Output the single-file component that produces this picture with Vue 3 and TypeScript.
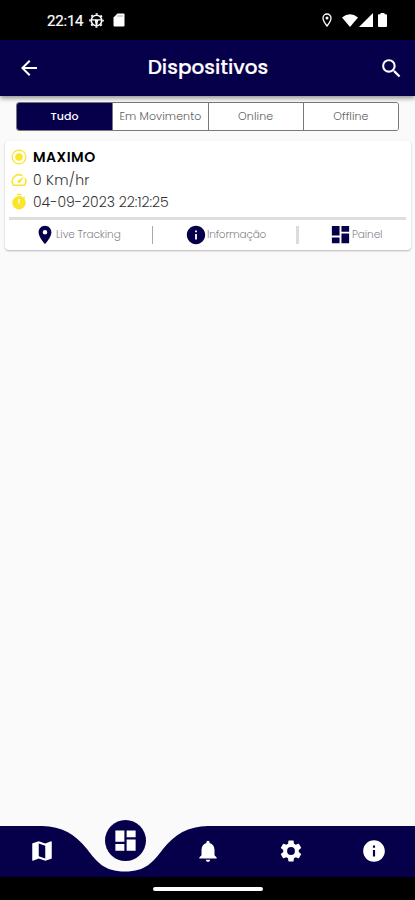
<script setup lang="ts">
import { ref } from 'vue'

const icons = {
  back: 'M20 11H7.83l5.59-5.59L12 4l-8 8 8 8 1.41-1.41L7.83 13H20v-2z',
  search: 'M15.5 14h-.79l-.28-.27A6.47 6.47 0 0 0 16 9.5 6.5 6.5 0 1 0 9.5 16c1.61 0 3.09-.59 4.23-1.57l.27.28v.79l5 4.99L20.49 19l-4.99-5zm-6 0C7.01 14 5 11.99 5 9.5S7.01 5 9.5 5 14 7.01 14 9.5 11.99 14 9.5 14z',
  pin: 'M12 2C8.13 2 5 5.13 5 9c0 5.25 7 13 7 13s7-7.75 7-13c0-3.87-3.13-7-7-7zm0 9.5a2.5 2.5 0 0 1 0-5 2.5 2.5 0 0 1 0 5z',
  info: 'M12 2C6.48 2 2 6.48 2 12s4.48 10 10 10 10-4.48 10-10S17.52 2 12 2zm1 15h-2v-6h2v6zm0-8h-2V7h2v2z',
  dashboard: 'M3 13h8V3H3v10zm0 8h8v-6H3v6zm10 0h8V11h-8v10zm0-18v6h8V3h-8z',
  map: 'M20.5 3l-.16.03L15 5.1 9 3 3.36 4.9c-.21.07-.36.25-.36.48V20.5c0 .28.22.5.5.5l.16-.03L9 18.9l6 2.1 5.64-1.9c.21-.07.36-.25.36-.48V3.5c0-.28-.22-.5-.5-.5zM15 19l-6-2.11V5l6 2.11V19z',
  bell: 'M12 22c1.1 0 2-.9 2-2h-4c0 1.1.89 2 2 2zm6-6v-5c0-3.07-1.64-5.64-4.5-6.32V4c0-.83-.67-1.5-1.5-1.5s-1.5.67-1.5 1.5v.68C7.63 5.36 6 7.92 6 11v5l-2 2v1h16v-1l-2-2z',
  gear: 'M19.14 12.94c.04-.3.06-.61.06-.94 0-.32-.02-.64-.07-.94l2.03-1.58c.18-.14.23-.41.12-.61l-1.92-3.32c-.12-.22-.37-.29-.59-.22l-2.39.96c-.5-.38-1.03-.7-1.62-.94l-.36-2.54c-.04-.24-.24-.41-.48-.41h-3.84c-.24 0-.43.17-.47.41l-.36 2.54c-.59.24-1.13.57-1.62.94l-2.39-.96c-.22-.08-.47 0-.59.22L2.74 8.87c-.12.21-.08.47.12.61l2.03 1.58c-.05.3-.09.63-.09.94s.02.64.07.94l-2.03 1.58c-.18.14-.23.41-.12.61l1.92 3.32c.12.22.37.29.59.22l2.39-.96c.5.38 1.03.7 1.62.94l.36 2.54c.05.24.24.41.48.41h3.84c.24 0 .44-.17.47-.41l.36-2.54c.59-.24 1.13-.56 1.62-.94l2.39.96c.22.08.47 0 .59-.22l1.92-3.32c.12-.22.07-.47-.12-.61l-2.01-1.58zM12 15.6A3.6 3.6 0 1 1 12 8.4a3.6 3.6 0 0 1 0 7.2z',
  radio: 'M12 7a5 5 0 1 0 0 10 5 5 0 0 0 0-10zm0-5a10 10 0 1 0 0 20 10 10 0 0 0 0-20zm0 18.4a8.4 8.4 0 1 1 0-16.8 8.4 8.4 0 0 1 0 16.8z',
  speed: 'M20.38 8.57l-1.23 1.85a8 8 0 0 1-.22 7.58H5.07A8 8 0 0 1 15.58 6.85l1.85-1.23A10 10 0 0 0 3.35 19a2 2 0 0 0 1.72 1h13.85a2 2 0 0 0 1.74-1 10 10 0 0 0-.27-10.44zm-9.79 6.84a2 2 0 0 0 2.83 0l5.66-8.49-8.49 5.66a2 2 0 0 0 0 2.83z',
  timer: 'M9 1h6v2H9zM19.03 7.39l1.42-1.42c-.43-.51-.9-.99-1.41-1.41l-1.42 1.42A8.96 8.96 0 0 0 12 4a9 9 0 1 0 7.03 3.39zM13 14h-2V8h2v6z',
}

const tabs = ['Tudo', 'Em Movimento', 'Online', 'Offline']
const activeTab = ref('Tudo')

const device = { name: 'MAXIMO', speed: '0 Km/hr', time: '04-09-2023 22:12:25' }

const navItems = [
  { id: 'map', icon: icons.map },
  { id: 'devices', icon: icons.dashboard },
  { id: 'alerts', icon: icons.bell },
  { id: 'settings', icon: icons.gear },
  { id: 'about', icon: icons.info },
]
const activeNav = 'devices'
</script>

<template>
  <div class="screen">
    <div class="status">
      <span class="clock">22:14</span>
      <svg class="wheel" viewBox="0 0 16 16">
        <circle cx="8" cy="8" r="5.6" fill="none" stroke="#fff" stroke-width="1.7" />
        <circle cx="8" cy="8" r="7" fill="none" stroke="#fff" stroke-width="1.6" stroke-dasharray="2.2 3.298" stroke-dashoffset="1.1" />
        <path d="M3 6.600h10v1.500H9.800L8.800 13H7.200l-1-4.900H3z" fill="#fff" />
      </svg>
      <svg class="sd" viewBox="0 0 12 14"><path d="M4.500.5H10.500a1 1 0 0 1 1 1v11a1 1 0 0 1-1 1h-9a1 1 0 0 1-1-1V4.500z" fill="#fff" /><path d="M5 2v2M7 2v2M9 2v2" stroke="#999" stroke-width=".8" /></svg>
      <span class="grow"></span>
      <svg class="loc" viewBox="0 0 10 14"><path d="M5 1a4 4 0 0 0-4 4c0 3 4 8 4 8s4-5 4-8a4 4 0 0 0-4-4z" fill="none" stroke="#fff" stroke-width="1.3" /><circle cx="5" cy="5" r="1.500" fill="#fff" /></svg>
      <svg class="wifi" viewBox="0 0 16 13"><path d="M0 3.500Q8-3 16 3.500L8 13z" fill="#fff" /></svg>
      <svg class="signal" viewBox="0 0 14 14"><path d="M14 0v14H0z" fill="#fff" /></svg>
      <svg class="battery" viewBox="0 0 9 14"><path d="M2.500 0h4v1.300H8a1 1 0 0 1 1 1V13a1 1 0 0 1-1 1H1a1 1 0 0 1-1-1V2.300a1 1 0 0 1 1-1h1.500z" fill="#fff" /></svg>
    </div>

    <header class="appbar">
      <svg class="bar-icon" viewBox="0 0 24 24"><path :d="icons.back" /></svg>
      <h1>Dispositivos</h1>
      <svg class="bar-icon search" viewBox="0 0 24 24"><path :d="icons.search" /></svg>
    </header>

    <main>
      <div class="tabs">
        <button v-for="t in tabs" :key="t" :class="{ active: t === activeTab }" @click="activeTab = t">{{ t }}</button>
      </div>

      <section class="card">
        <div class="row name"><svg viewBox="0 0 24 24"><path :d="icons.radio" /></svg><span>{{ device.name }}</span></div>
        <div class="row speed"><svg viewBox="0 0 24 24"><path :d="icons.speed" /></svg><span>{{ device.speed }}</span></div>
        <div class="row time"><svg viewBox="0 0 24 24"><path :d="icons.timer" /></svg><span>{{ device.time }}</span></div>
        <div class="rule"></div>
        <div class="actions">
          <div class="action live"><svg viewBox="0 0 24 24"><path :d="icons.pin" /></svg><span>Live Tracking</span></div>
          <i class="sep"></i>
          <div class="action details"><svg viewBox="0 0 24 24"><path :d="icons.info" /></svg><span>Informação</span></div>
          <i class="sep wide"></i>
          <div class="action panel"><svg viewBox="0 0 24 24"><path :d="icons.dashboard" /></svg><span>Painel</span></div>
        </div>
      </section>
    </main>

    <nav>
      <svg class="wave" viewBox="0 0 415 51"><path d="M0 0H42C62 .5 75 8 87 23C97 36 104 45.500 125 45.500C146 45.500 153 36 163 23C175 8 188 .5 208 0H415V51H0Z" /></svg>
      <div v-for="n in navItems" :key="n.id" class="nav-item" :class="{ current: n.id === activeNav }">
        <svg viewBox="0 0 24 24"><path :d="n.icon" /></svg>
      </div>
    </nav>
    <div class="gesture"><span></span></div>
  </div>
</template>

<style>
body { margin: 0; background: #fafafa; }
</style>

<style scoped>
.screen {
  width: 415px;
  height: 900px;
  display: flex;
  flex-direction: column;
  overflow: hidden;
  background: #fafafa;
  font-family: Poppins, Inter, "Liberation Sans", sans-serif;
  white-space: nowrap;
}
svg { display: block; flex: none; }
.grow { flex: 1; }
.status {
  height: 40px;
  flex: none;
  box-sizing: border-box;
  padding: 0 28px 0 47px;
  display: flex;
  align-items: center;
  background: #000;
  color: #fff;
}
.clock { width: 42px; font: 400 15px Roboto, sans-serif; letter-spacing: -.2px; line-height: 40px; padding-top: 1px; -webkit-text-stroke: .2px #fff; }
.wheel { width: 15px; height: 15px; }
.sd { width: 12px; height: 14px; margin-left: 9px; }
.loc { width: 10px; height: 14px; margin-right: 10px; }
.wifi { width: 16px; height: 13px; }
.signal { width: 14px; height: 14px; margin: 0 5px 0 1px; }
.battery { width: 9px; height: 14px; }
.appbar {
  height: 56px;
  flex: none;
  box-sizing: border-box;
  padding: 0 13px 0 17px;
  display: flex;
  align-items: center;
  background: #06004b;
  box-shadow: 0 2px 5px rgba(0, 0, 0, .45);
  color: #fff;
  z-index: 1;
}
.bar-icon { width: 24px; height: 24px; fill: #fff; }
.bar-icon.search { width: 25px; height: 25px; margin-right: -2px; }
h1 { flex: 1; margin: 0; font-size: 20px; font-weight: 500; line-height: 52px; height: 54px; text-align: center; letter-spacing: .05px; padding-right: 4px; -webkit-text-stroke: .2px #fff; }
main { flex: 1; padding: 6px 4px 0 5px; }
.tabs {
  display: grid;
  grid-template-columns: repeat(4, 1fr);
  margin: 0 12px 0 11px;
  height: 29px;
  box-sizing: border-box;
  border: 1px solid #77777c;
  border-radius: 3px;
  overflow: hidden;
}
.tabs button {
  border: 0;
  border-left: 1px solid #77777c;
  padding: 0;
  background: #fff;
  color: #5c5c60;
  font: 300 11px Poppins, Inter, sans-serif;
  letter-spacing: .1px;
  line-height: 27px;
}
.tabs button:first-child { border-left: 0; }
.tabs .active { background: #06004b; color: #fff; font-weight: 500; }
.card {
  margin-top: 10px;
  height: 109px;
  box-sizing: border-box;
  padding: 5px 5px 0 4px;
  background: #fff;
  border-radius: 4px;
  box-shadow: 0 1px 2px rgba(0, 0, 0, .28);
}
.row { display: flex; align-items: center; height: 22.500px; font-size: 14px; font-weight: 300; color: #333; }
.row svg { width: 18px; height: 18px; margin: 0 5px 0 1px; fill: #fbe52b; }
.speed span { letter-spacing: .25px; padding-top: 1px; }
.name { color: #000; font-weight: 600; letter-spacing: .5px; }
.rule { height: 3px; margin-top: 3.500px; background: #dedede; }
.actions { display: flex; align-items: center; height: 29px; font-size: 10.500px; font-weight: 300; color: #85858a; }
.action { display: flex; align-items: center; }
.action svg { fill: #06004b; }
.live { width: 143px; box-sizing: border-box; padding-left: 25px; }
.live svg { width: 22px; height: 22px; }
.live span { letter-spacing: -.1px; }
.details { width: 143px; box-sizing: border-box; padding-left: 32px; }
.details svg { width: 22px; height: 22px; }
.details span { letter-spacing: -.2px; }
.panel { padding-left: 30px; }
.panel svg { width: 23px; height: 23px; }
.panel span { letter-spacing: -.1px; }
.sep { width: 1px; height: 18px; background: #aaa; }
.sep.wide { width: 3px; background: #dcdcdc; }
nav {
  position: relative;
  height: 51px;
  flex: none;
  display: grid;
  grid-template-columns: repeat(5, 83px);
}
.wave { position: absolute; inset: 0; width: 415px; height: 51px; fill: #06004b; }
.nav-item { position: relative; box-sizing: border-box; padding-bottom: 1px; display: flex; align-items: center; justify-content: center; }
.nav-item svg { width: 26px; height: 26px; fill: #fff; }
.current::before {
  content: "";
  position: absolute;
  left: 21.500px;
  top: -6px;
  width: 41px;
  height: 41px;
  border-radius: 50%;
  background: #06004b;
}
.current svg { position: relative; top: -10.500px; left: .5px; width: 27px; height: 27px; }
.gesture { height: 23px; flex: none; background: #000; display: flex; justify-content: center; align-items: center; }
.gesture span { width: 110px; height: 4px; border-radius: 2px; background: #fff; }
</style>
